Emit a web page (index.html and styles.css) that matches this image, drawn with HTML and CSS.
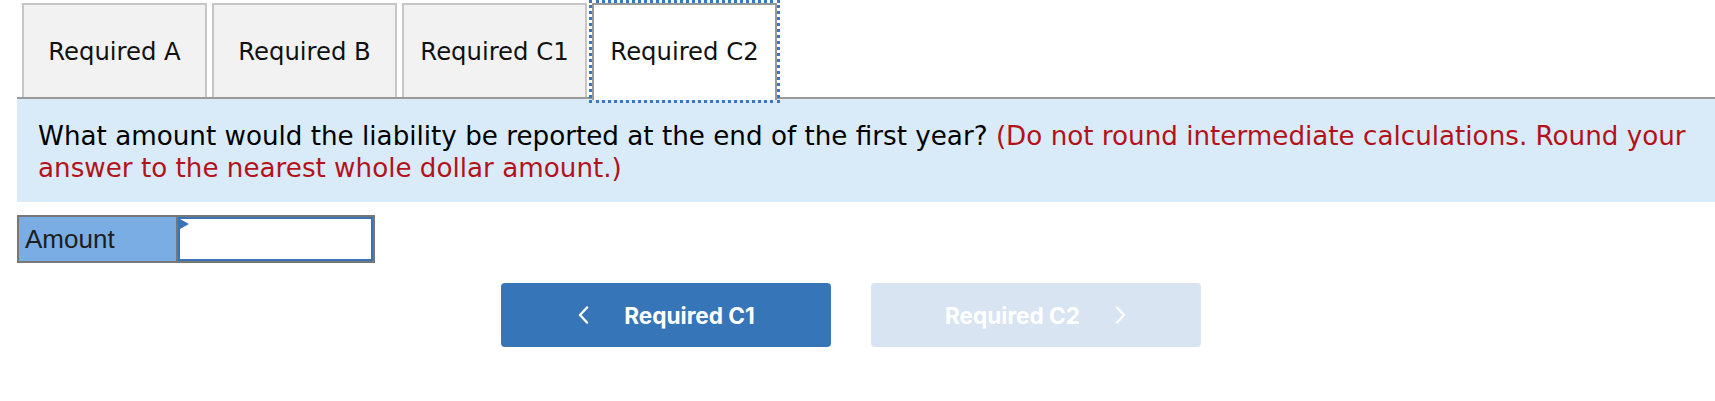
FILE: index.html
```html
<!DOCTYPE html>
<html lang="en">
<head>
<meta charset="utf-8">
<title>Required C2</title>
<link rel="stylesheet" href="styles.css">
</head>
<body>
<div class="wrap">
  <div class="tabs">
    <div class="tab">Required A</div>
    <div class="tab">Required B</div>
    <div class="tab">Required C1</div>
    <div class="tab active">Required C2</div>
  </div>
  <div class="panel">
    <p class="question">What amount would the liability be reported at the end of the first year? <span class="hint">(Do not round intermediate calculations. Round your answer to the nearest whole dollar amount.)</span></p>
  </div>
  <div class="amount-row">
    <div class="amount-label">Amount</div>
    <div class="amount-input"><span class="marker"></span></div>
  </div>
  <div class="nav">
    <button class="nav-btn prev" type="button">
      <svg class="chev" width="14" height="18" viewBox="0 0 14 18"><polyline points="10,1.5 3,9 10,16.5" fill="none" stroke="#fff" stroke-width="2.4" stroke-linecap="round" stroke-linejoin="round"/></svg>
      <span>Required C1</span>
    </button>
    <button class="nav-btn next" type="button">
      <span>Required C2</span>
      <svg class="chev" width="14" height="18" viewBox="0 0 14 18"><polyline points="4,1.5 11,9 4,16.5" fill="none" stroke="#fff" stroke-width="2.4" stroke-linecap="round" stroke-linejoin="round"/></svg>
    </button>
  </div>
</div>
</body>
</html>
```
FILE: styles.css
```css
html, body {
  margin: 0;
  padding: 0;
  background: #fff;
}
.wrap {
  padding-left: 17px;
}
.tabs {
  display: flex;
  gap: 5px;
  padding: 3px 0 0 5px;
  border-bottom: 2px solid #9a9a9a;
}
.tab {
  box-sizing: border-box;
  width: 185px;
  height: 94px;
  display: flex;
  align-items: center;
  justify-content: center;
  background: #f2f2f2;
  border: 2px solid #c6c6c6;
  border-bottom: none;
  font-family: "DejaVu Sans", Verdana, sans-serif;
  font-size: 24.3px;
  color: #111;
}
.tab.active {
  background: #fff;
  border-color: #999;
  outline: 3px dotted #3a78c3;
  position: relative;
  margin-bottom: -3px;
  height: 97px;
  padding-bottom: 3px;
}
.panel {
  background: #d9ebf9;
  padding: 21px 20px 18px 21px;
}
.question {
  margin: 0;
  font-family: "DejaVu Sans", Verdana, sans-serif;
  font-size: 26.2px;
  line-height: 32px;
  color: #000;
}
.hint {
  color: #b5111a;
}
.amount-row {
  display: inline-flex;
  margin-top: 13px;
  border: 2px solid #777;
  vertical-align: top;
}
.amount-label {
  box-sizing: border-box;
  width: 159px;
  height: 44px;
  padding-left: 6px;
  background: #79ade3;
  border-right: 2px solid #777;
  font-family: "Liberation Sans", Arial, sans-serif;
  font-size: 26px;
  line-height: 44px;
  color: #1e1e1e;
}
.amount-input {
  box-sizing: border-box;
  width: 195px;
  height: 44px;
  border: 2px solid #3a74b8;
  background: #fff;
  position: relative;
}
.marker {
  position: absolute;
  left: 0;
  top: 0;
  width: 0;
  height: 0;
  border-top: 5px solid transparent;
  border-bottom: 5px solid transparent;
  border-left: 9px solid #3a74b8;
}
.nav {
  display: flex;
  justify-content: center;
  gap: 40px;
  padding: 20px 30px 0 0;
}
.nav-btn {
  box-sizing: border-box;
  width: 330px;
  height: 64px;
  border: none;
  border-radius: 4px;
  display: flex;
  align-items: center;
  justify-content: center;
  gap: 33px;
  font-family: Inter, Roboto, sans-serif;
  font-weight: 700;
  font-size: 22.6px;
  color: #fff;
  padding: 0;
}
.nav-btn.prev {
  background: #3775b9;
}
.nav-btn.next {
  background: #d8e4f2;
}
.chev {
  display: block;
}
```
